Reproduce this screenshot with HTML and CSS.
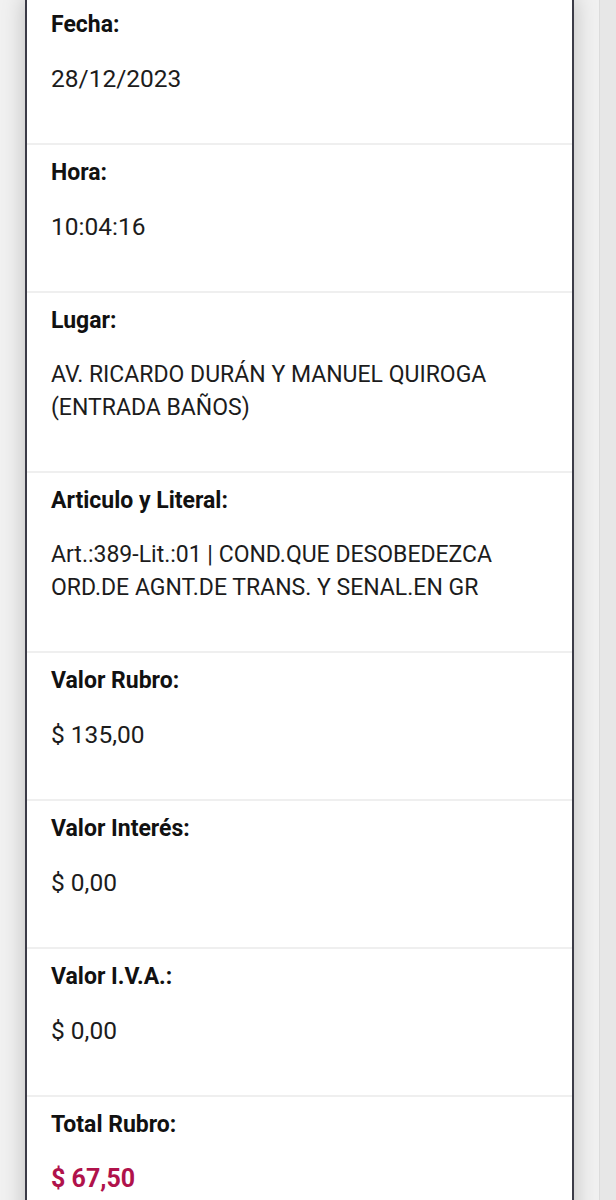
FILE: index.html
```html
<!DOCTYPE html>
<html>
    <head>
        <meta charset="UTF-8">
        <title>Detalle de infracción</title>
        <link rel="stylesheet" href="styles.css">
    </head>
    <body>
        <div class="page">
            <div class="card">
                <div class="row">
                    <div class="label">Fecha:</div>
                    <div class="value num">28/12/2023</div>
                </div>
                <div class="row">
                    <div class="label">Hora:</div>
                    <div class="value num">10:04:16</div>
                </div>
                <div class="row tall">
                    <div class="label">Lugar:</div>
                    <div class="value">AV. RICARDO DURÁN Y MANUEL QUIROGA (ENTRADA BAÑOS)</div>
                </div>
                <div class="row tall">
                    <div class="label">Articulo y Literal:</div>
                    <div class="value">Art.:389-Lit.:01 | COND.QUE DESOBEDEZCA ORD.DE AGNT.DE TRANS. Y SENAL.EN GR</div>
                </div>
                <div class="row">
                    <div class="label">Valor Rubro:</div>
                    <div class="value num">$ 135,00</div>
                </div>
                <div class="row">
                    <div class="label">Valor Interés:</div>
                    <div class="value num">$ 0,00</div>
                </div>
                <div class="row">
                    <div class="label">Valor I.V.A.:</div>
                    <div class="value num">$ 0,00</div>
                </div>
                <div class="row">
                    <div class="label">Total Rubro:</div>
                    <div class="value total">$ 67,50</div>
                </div>
            </div>
        </div>
        <div class="rail"></div>
    </body>
</html>
```

FILE: styles.css
```css
*{ margin:0; padding:0; box-sizing:border-box;}
html, body{ height:100%;}
body{
    display:flex;
    background:#f1f1f1;
    font-family:Roboto,"Noto Sans",sans-serif;
    overflow:hidden;
}
.page{
    flex:1;
    padding:0 25px;
}
.card{
    margin-top:-3px;
    width:549px;
    min-height:1210px;
    background:#fff;
    border-left:2px solid #3b3b47;
    border-right:2px solid #3b3b47;
    box-shadow:0 0 22px rgba(0,0,0,.22);
}
.row{
    height:148px;
    padding:13px 24px 0;
    border-bottom:2px solid #efefef;
}
.row.tall{
    height:180px;
}
.label{
    font-size:23px;
    line-height:30px;
    font-weight:700;
    color:#111;
}
.value{
    margin-top:22px;
    font-size:23px;
    line-height:33px;
    color:#1c1c1c;
}
.value.num{
    font-size:24.5px;
}
.value.total{
    font-size:25px;
    font-weight:700;
    color:#b0124b;
}
.rail{
    width:17px;
    background:#e7e7e7;
    border-left:1px solid #dcdcdc;
}
```
